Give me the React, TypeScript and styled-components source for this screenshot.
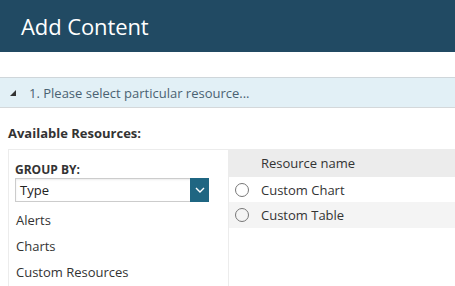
import styled, { createGlobalStyle } from "styled-components";

const GlobalStyle = createGlobalStyle`
  html, body {
    margin: 0;
    padding: 0;
    background: #fff;
    overflow: hidden;
  }
  body {
    font-family: "Open Sans", "Liberation Sans", sans-serif;
    color: #333;
  }
`;

const groups = ["Alerts", "Charts", "Custom Resources"];
const resources = ["Custom Chart", "Custom Table"];

const App = () => {
  return (
    <>
      <GlobalStyle />
      <Page>
        <Header>
          <Title>Add Content</Title>
        </Header>
        <StepBar>
          <Triangle />
          <StepText>1. Please select particular resource...</StepText>
        </StepBar>
        <SectionLabel>Available Resources:</SectionLabel>
        <Panels>
          <GroupPanel>
            <GroupLabel>GROUP BY:</GroupLabel>
            <Select>
              <SelectValue>Type</SelectValue>
              <SelectButton>
                <svg width="10" height="6" viewBox="0 0 10 6">
                  <path d="M1 1l4 4 4-4" fill="none" stroke="#fff" strokeWidth="1.4" />
                </svg>
              </SelectButton>
            </Select>
            <GroupList>
              {groups.map((g) => (
                <GroupItem key={g}>{g}</GroupItem>
              ))}
            </GroupList>
          </GroupPanel>
          <ResourcePanel>
            <TableHead>Resource name</TableHead>
            {resources.map((r, i) => (
              <Row key={r} $striped={i % 2 === 1}>
                <Radio />
                <RowText>{r}</RowText>
              </Row>
            ))}
          </ResourcePanel>
        </Panels>
      </Page>
    </>
  );
};

export default App;

const Page = styled.div`
  width: 455px;
  height: 286px;
  display: flex;
  flex-direction: column;
`;

const Header = styled.header`
  height: 52px;
  flex-shrink: 0;
  background: #214a63;
  display: flex;
  align-items: center;
  padding-left: 21px;
  margin-bottom: 25px;
`;

const Title = styled.h1`
  margin: 0;
  font-size: 22px;
  font-weight: 400;
  color: #fff;
  letter-spacing: -0.1px;
`;

const StepBar = styled.div`
  height: 29px;
  flex-shrink: 0;
  background: #e2f0f6;
  border-top: 1px solid #cfd6da;
  border-bottom: 1px solid #d4d8da;
  display: flex;
  align-items: center;
  padding-left: 10px;
`;

const Triangle = styled.span`
  width: 0;
  height: 0;
  border-left: 6px solid transparent;
  border-bottom: 6px solid #333;
  margin-right: 13px;
  margin-top: 1px;
`;

const StepText = styled.span`
  font-size: 13px;
  color: #4a6272;
`;

const SectionLabel = styled.div`
  font-size: 13px;
  font-weight: 700;
  color: #333;
  line-height: 18px;
  padding: 16px 0 0 8px;
  height: 25px;
  flex-shrink: 0;
`;

const Panels = styled.div`
  display: flex;
  margin-left: 8px;
  flex: 1;
  border-top: 1px solid #ececec;
`;

const GroupPanel = styled.div`
  width: 221px;
  border-left: 1px solid #ececec;
  border-right: 1px solid #ececec;
  padding: 12px 0 0 6px;
  box-sizing: border-box;
`;

const GroupLabel = styled.div`
  font-size: 12px;
  font-weight: 700;
  color: #333;
  line-height: 16px;
`;

const Select = styled.div`
  width: 194px;
  height: 24px;
  display: flex;
  border: 1px solid #ccc;
  border-right: none;
  box-sizing: border-box;
  box-shadow: inset 0 1px 2px rgba(0, 0, 0, 0.08);
`;

const SelectValue = styled.div`
  flex: 1;
  font-size: 13px;
  color: #222;
  padding-left: 4px;
  line-height: 22px;
`;

const SelectButton = styled.div`
  width: 19px;
  margin: -1px 0;
  background: #1f6682;
  display: flex;
  align-items: center;
  justify-content: center;
`;

const GroupList = styled.div`
  display: flex;
  flex-direction: column;
  padding-top: 5px;
`;

const GroupItem = styled.div`
  font-size: 13px;
  color: #333;
  line-height: 26px;
  padding-left: 1px;
`;

const ResourcePanel = styled.div`
  flex: 1;
  display: flex;
  flex-direction: column;
`;

const TableHead = styled.div`
  height: 27px;
  background: #ececec;
  font-size: 13px;
  color: #333;
  padding-left: 32px;
  line-height: 27px;
`;

const Row = styled.div<{ $striped: boolean }>`
  height: 25px;
  display: flex;
  align-items: center;
  padding-left: 6px;
  background: ${({ $striped }) => ($striped ? "#f4f4f4" : "#fff")};

  & + & {
    height: 26px;
  }
`;

const Radio = styled.span`
  width: 12px;
  height: 12px;
  border: 1px solid #777;
  border-radius: 50%;
  margin-right: 12px;
`;

const RowText = styled.span`
  font-size: 13px;
  color: #333;
`;
